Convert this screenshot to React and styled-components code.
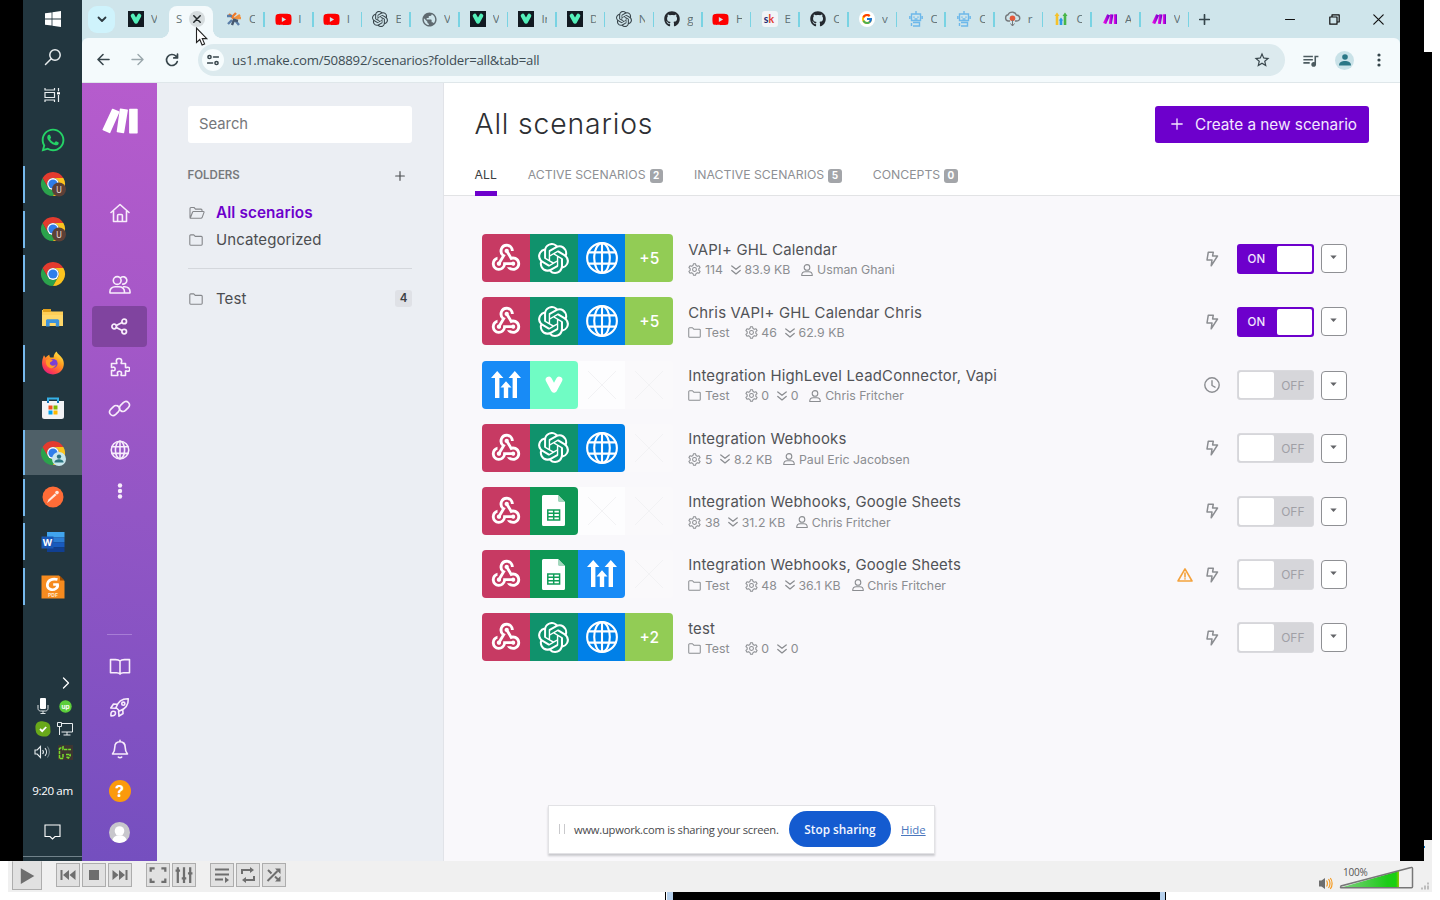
import React from "react";
import styled, { createGlobalStyle, css } from "styled-components";
import { FaWhatsapp, FaGithub, FaYoutube } from "react-icons/fa";
import { SiOpenai } from "react-icons/si";
import { FcGoogle } from "react-icons/fc";
import { MdWebhook, MdQueueMusic, MdStarBorder, MdPublic } from "react-icons/md";

const GlobalStyle = createGlobalStyle`
  * { box-sizing: border-box; }
  body { margin: 0; background: #fff; overflow: hidden; }
  svg { display: block; flex: none; }
`;

const inter = `"Inter", "Liberation Sans", sans-serif`;
const segoe = `"Open Sans", "Noto Sans", sans-serif`;

/* ---------- frame ---------- */
const Screen = styled.div`
  width: 1440px;
  height: 900px;
  display: flex;
  flex-direction: column;
  background: #fff;
  font-family: ${inter};
  overflow: hidden;
`;
const VideoRow = styled.div`
  display: flex;
  height: 861px;
  flex: none;
`;
const BlackBar = styled.div`
  width: ${(p) => p.$w}px;
  background: #000;
`;
const EdgeStrip = styled.div`
  width: 8px;
  padding-top: 52px;
  background: #fff;
  display: flex;
  flex-direction: column;
`;
const EdgeBlack = styled.div`
  height: 788px;
  background: #000;
`;
const EdgeGray = styled.div`
  height: 21px;
  background: #f0f0f0;
  padding-top: 6px;
  &::before {
    content: "";
    display: block;
    width: 1px;
    height: 2px;
    background: #0078d4;
  }
`;

/* ---------- taskbar ---------- */
const Taskbar = styled.div`
  width: 59px;
  background: #22363f;
  display: flex;
  flex-direction: column;
`;
const SystemCell = styled.div`
  height: 38px;
  display: flex;
  align-items: center;
  justify-content: center;
`;
const Apps = styled.div`
  margin-top: 3.4px;
  display: flex;
  flex-direction: column;
`;
const AppCell = styled.div`
  height: 44.7px;
  display: flex;
  align-items: center;
  background: ${(p) => (p.$active ? "#4f6068" : "transparent")};
`;
const AppMark = styled.div`
  width: 2px;
  height: ${(p) => (p.$active ? "44.7px" : "37px")};
  background: ${(p) => (p.$open ? "#76b9ed" : "transparent")};
`;
const AppIcon = styled.div`
  flex: 1;
  padding-right: 2px;
  display: flex;
  justify-content: center;
`;
const Tray = styled.div`
  margin-top: auto;
  display: flex;
  flex-direction: column;
`;
const TrayGrid = styled.div`
  display: grid;
  grid-template-columns: 23px 23px;
  grid-auto-rows: 23.2px;
  padding-left: 8px;
  place-items: center;
`;
const Clock = styled.div`
  height: 30px;
  margin-top: 12px;
  line-height: 30px;
  text-align: center;
  font: 11.6px/30px ${segoe};
  letter-spacing: -0.35px;
  color: #fff;
  white-space: nowrap;
`;
const NoticeCell = styled.div`
  height: 50px;
  padding-top: 2px;
  display: flex;
  align-items: center;
  justify-content: center;
`;
const ShowDesktop = styled.div`
  height: 5px;
  border-top: 1px solid #71828a;
`;

/* ---------- browser chrome ---------- */
const Browser = styled.div`
  width: 1318px;
  display: flex;
  flex-direction: column;
  position: relative;
  background: #cfe5eb;
`;
const TabStrip = styled.div`
  height: 38px;
  display: flex;
  align-items: center;
  flex: none;
`;
const TabSearch = styled.div`
  width: 27px;
  height: 27px;
  margin-left: 6px;
  border-radius: 9px;
  background: #cff3fc;
  display: flex;
  align-items: center;
  justify-content: center;
`;
const Tab = styled.div`
  width: ${(p) => p.$w || 48.65}px;
  height: 38px;
  padding-left: ${(p) => p.$pad ?? 10.2}px;
  display: flex;
  align-items: center;
  position: relative;
`;
const TabIcon = styled.div`
  width: 16px;
  height: 16px;
  display: flex;
  align-items: center;
  justify-content: center;
`;
const TabLabel = styled.span`
  width: 6px;
  margin-left: ${(p) => p.$ml ?? 7}px;
  overflow: hidden;
  font: 11.5px/16px ${segoe};
  color: #4a5a60;
  opacity: 0.85;
  white-space: nowrap;
`;
const TabSep = styled.i`
  width: 1.6px;
  height: 15px;
  margin-left: auto;
  background: #79d3e3;
`;
const ActiveTab = styled.div`
  width: 44px;
  height: 32px;
  margin-top: 6px;
  background: #f4fafc;
  border-radius: 8px 8px 0 0;
  display: flex;
  align-items: center;
  padding-left: 7px;
  padding-bottom: 6px;
  position: relative;
  &::before, &::after {
    content: "";
    position: absolute;
    bottom: 0;
    width: 8px;
    height: 8px;
  }
  &::before { left: -8px; background: radial-gradient(circle at 0 0, transparent 7.6px, #f4fafc 8px); }
  &::after { right: -8px; background: radial-gradient(circle at 100% 0, transparent 7.6px, #f4fafc 8px); }
`;
const CloseDot = styled.div`
  width: 16px;
  height: 16px;
  margin-left: 7px;
  border-radius: 50%;
  background: #d6dcde;
  display: flex;
  align-items: center;
  justify-content: center;
`;
const NewTab = styled.div`
  margin-left: 10px;
`;
const WindowButtons = styled.div`
  margin-left: auto;
  display: flex;
`;
const WindowButton = styled.div`
  width: 44px;
  display: flex;
  align-items: center;
  justify-content: center;
`;
const Toolbar = styled.div`
  height: 45px;
  flex: none;
  background: #f4fafc;
  border-bottom: 1px solid #dfe7ea;
  border-radius: 6px 6px 0 0;
  display: flex;
  align-items: center;
`;
const NavButton = styled.div`
  width: 34.5px;
  display: flex;
  justify-content: center;
`;
const NavButtons = styled.div`
  margin-left: 4px;
  display: flex;
`;
const Omnibox = styled.div`
  width: 1087px;
  height: 32px;
  margin-left: 8.5px;
  padding: 0 14px 0 4px;
  border-radius: 16px;
  background: #dceaee;
  display: flex;
  align-items: center;
`;
const SiteInfo = styled.div`
  width: 22px;
  height: 22px;
  border-radius: 50%;
  background: #f6fcfd;
  display: flex;
  align-items: center;
  justify-content: center;
`;
const Url = styled.span`
  margin-left: 8px;
  font: 13.2px/20px ${segoe};
  letter-spacing: -0.21px;
  color: #3e4d54;
  flex: 1;
`;
const ToolIcons = styled.div`
  margin-left: 8px;
  display: flex;
  align-items: center;
`;
const ToolIcon = styled.div`
  width: 34.5px;
  display: flex;
  justify-content: center;
`;
const ProfileDot = styled.div`
  width: 19px;
  height: 19px;
  border-radius: 50%;
  background: #c9e2e8;
  display: flex;
  align-items: center;
  justify-content: center;
`;
const Cursor = styled.div`
  position: absolute;
  left: 113px;
  top: 27px;
`;

/* ---------- app ---------- */
const Page = styled.div`
  flex: 1;
  display: flex;
  min-height: 0;
`;
const Rail = styled.nav`
  width: 75px;
  background: linear-gradient(188deg, #b65ccd 0%, #a758c8 28%, #9256c5 55%, #8151c2 82%, #744fbf 100%);
  display: flex;
  flex-direction: column;
  align-items: center;
  color: #f7ecfb;
`;
const RailLogo = styled.div`
  margin-top: 25px;
  height: 84px;
`;
const RailCell = styled.div`
  width: 55px;
  height: 41.15px;
  margin-bottom: ${(p) => p.$mb || 0}px;
  border-radius: 4px;
  background: ${(p) => (p.$on ? "#80449f" : "transparent")};
  display: flex;
  align-items: center;
  justify-content: center;
`;
const RailBottom = styled.div`
  margin-top: auto;
  padding-bottom: 8px;
  display: flex;
  flex-direction: column;
  align-items: center;
`;
const RailRule = styled.div`
  width: 25px;
  height: 1px;
  margin-bottom: 11.6px;
  background: #a77dd6;
`;
const HelpDot = styled.div`
  width: 22px;
  height: 22px;
  border-radius: 50%;
  background: #fb9a0c;
  color: #fff;
  font: 700 16px/22px ${inter};
  text-align: center;
`;
const Folders = styled.aside`
  width: 287px;
  padding: 23px 31px 0 30.5px;
  background: #ebeef3;
  border-right: 1px solid #e1e3e8;
`;
const SearchBox = styled.div`
  height: 36.5px;
  padding-left: 11.5px;
  border-radius: 3px;
  background: #fff;
  font-size: 14.8px;
  line-height: 37px;
  color: #75777b;
`;
const FoldersHead = styled.div`
  margin-top: 22.5px;
  height: 20px;
  padding-right: 7px;
  display: flex;
  align-items: center;
  justify-content: space-between;
  font-size: 11.5px;
  font-weight: 600;
  color: #77797c;
  svg { margin-top: 2px; }
`;
const FolderRow = styled.div`
  height: 27px;
  margin-top: ${(p) => p.$mt || 0}px;
  display: flex;
  align-items: center;
  font-size: 15px;
  letter-spacing: 0.08px;
  color: #4b4d50;
  ${(p) => p.$active && css`
    font-size: 15.3px;
    letter-spacing: 0.1px;
    font-weight: 600;
    color: #6d00cc;
  `}
`;
const FolderGlyph = styled.div`
  width: 28.5px;
  padding-left: 1px;
  color: #85878b;
`;
const FolderRule = styled.div`
  height: 1px;
  margin-top: 15px;
  background: #d4d7dc;
`;
const Count = styled.span`
  margin-left: auto;
  width: 17px;
  height: 17px;
  border-radius: 3px;
  background: #dfe1e6;
  color: #3c3e42;
  font-size: 11.5px;
  font-weight: 600;
  line-height: 17px;
  text-align: center;
`;
const Main = styled.main`
  width: 956px;
  background: #f9f8fb;
  display: flex;
  flex-direction: column;
`;
const Header = styled.header`
  height: 113px;
  flex: none;
  padding: 23px 31px 0 30.5px;
  background: #fff;
  border-bottom: 1px solid #e2e3e5;
  display: flex;
  flex-direction: column;
`;
const HeaderTop = styled.div`
  display: flex;
  justify-content: space-between;
`;
const Title = styled.h1`
  margin: 0;
  font-size: 28.3px;
  font-weight: 300;
  line-height: 37px;
  letter-spacing: 0.85px;
  color: #2d2f33;
`;
const CreateButton = styled.div`
  width: 214px;
  height: 36.5px;
  padding-left: 16px;
  border-radius: 3px;
  background: #6d00cc;
  color: #f4e8ff;
  display: flex;
  align-items: center;
  gap: 12px;
  font-size: 15.3px;
  white-space: nowrap;
`;
const Tabs = styled.div`
  margin-top: auto;
  margin-bottom: -1px;
  display: flex;
  gap: 31px;
  height: 37px;
`;
const FilterTab = styled.div`
  height: 37px;
  padding-top: 6px;
  display: flex;
  gap: 4px;
  font-size: 12.25px;
  line-height: 19px;
  white-space: nowrap;
  color: ${(p) => (p.$on ? "#3b3d41" : "#8e9094")};
  border-bottom: 5px solid ${(p) => (p.$on ? "#6d00cc" : "transparent")};
`;
const TabCount = styled.span`
  width: 13.5px;
  height: 13.5px;
  margin-top: 4px;
  border-radius: 3px;
  background: #a3a5a9;
  color: #fff;
  font-size: 10px;
  font-weight: 700;
  line-height: 13.5px;
  text-align: center;
`;
const List = styled.div`
  padding: 31.3px 53.4px 0 38.2px;
`;
const Scenario = styled.div`
  height: 63.15px;
  padding-top: 7px;
  display: flex;
`;
const Modules = styled.div`
  width: 191px;
  height: 48px;
  display: flex;
  border-radius: 4px;
  overflow: hidden;
`;
const Module = styled.div`
  width: 47.75px;
  height: 48px;
  display: flex;
  align-items: center;
  justify-content: center;
  background: ${(p) => p.$bg};
  color: #fff;
  font-size: 15.5px;
  font-weight: 500;
  ${(p) => p.$last && "border-radius: 0 4px 4px 0;"}
`;
const Info = styled.div`
  margin-left: 15px;
  padding-top: 5.4px;
  flex: 1;
`;
const Name = styled.div`
  font-size: 14.9px;
  line-height: 20px;
  letter-spacing: 0.21px;
  color: #515357;
  white-space: nowrap;
`;
const Meta = styled.div`
  display: flex;
  align-items: center;
  height: 20px;
  font-size: 12.3px;
  color: #8b8d91;
  white-space: nowrap;
`;
const MetaItem = styled.span`
  display: flex;
  align-items: center;
  gap: 3.7px;
  margin-right: ${(p) => p.$mr}px;
`;
const Controls = styled.div`
  height: 49px;
  display: flex;
  align-items: center;
  color: #8b8d91;
`;
const Trigger = styled.div`
  width: 16px;
  display: flex;
  justify-content: center;
  margin-left: 11px;
`;
const Toggle = styled.div`
  width: 76.5px;
  height: 30.5px;
  margin-left: 17px;
  padding: 2px;
  border-radius: 3px;
  display: flex;
  flex-direction: ${(p) => (p.$on ? "row" : "row-reverse")};
  align-items: center;
  background: ${(p) => (p.$on ? "#6d00cc" : "#d6d6da")};
  color: ${(p) => (p.$on ? "#f2e6fd" : "#a0a0a6")};
  font-size: 12px;
  ${(p) => !p.$on && "border: 1px solid #dadade; padding: 1px;"}
`;
const ToggleText = styled.span`
  flex: 1;
  padding-right: ${(p) => (p.$on ? 3 : 0)}px;
  text-align: center;
  font-size: ${(p) => (p.$on ? 11.5 : 12)}px;
  font-weight: ${(p) => (p.$on ? 500 : 400)};
`;
const Knob = styled.span`
  width: 35px;
  height: 26.5px;
  border-radius: 2px;
  background: #fff;
`;
const MenuButton = styled.div`
  width: 25.5px;
  height: 29px;
  margin-left: 7.5px;
  border: 1px solid #8f9094;
  border-radius: 4px;
  background: #fff;
  display: flex;
  align-items: center;
  justify-content: center;
  padding-bottom: 2px;
`;

/* ---------- sharing bar ---------- */
const ShareBar = styled.div`
  position: absolute;
  left: 466px;
  top: 805px;
  width: 387px;
  height: 49px;
  padding: 0 0 1px 10px;
  background: #fff;
  border: 1px solid #e2e2e5;
  box-shadow: 0 2px 2px #c9c9cd;
  display: flex;
  align-items: center;
  font-family: ${segoe};
  font-size: 11.2px;
  color: #48494c;
  white-space: nowrap;
`;
const Grip = styled.i`
  width: 6px;
  height: 10px;
  margin-right: 9px;
  border: solid #c9c9cc;
  border-width: 0 1.5px;
`;
const ShareText = styled.span`
  width: 215px;
  letter-spacing: -0.24px;
`;
const StopButton = styled.div`
  width: 102px;
  height: 36px;
  border-radius: 18px;
  background: #145bd0;
  color: #f3f7ff;
  font-size: 11.8px;
  font-weight: 600;
  line-height: 36px;
  text-align: center;
`;
const HideLink = styled.span`
  margin-left: 10px;
  color: #4a76bd;
  font-size: 11.4px;
  text-decoration: underline;
`;

/* ---------- player ---------- */
const Player = styled.div`
  height: 31px;
  flex: none;
  margin: 0 8px;
  padding-left: 4px;
  background: #f0f0f0;
  display: flex;
`;
const PlayerGroup = styled.div`
  display: flex;
  gap: 2px;
  margin: 2px 0 0 14px;
`;
const PlayerButton = styled.div`
  width: ${(p) => p.$s || 24}px;
  height: ${(p) => (p.$s ? 29 : 24)}px;
  border: 1px solid #adadad;
  ${(p) => p.$s && "border-top-color: #e1e1e1;"}
  background: #e1e1e1;
  display: flex;
  align-items: center;
  justify-content: center;
`;
const Volume = styled.div`
  margin-left: auto;
  display: flex;
  position: relative;
`;
const VolumeText = styled.span`
  position: absolute;
  left: 25px;
  top: 5px;
  font: 10px/13px ${segoe};
  letter-spacing: -0.2px;
  color: #555;
`;
const BottomStrip = styled.div`
  height: 8px;
  display: flex;
  padding-left: 665px;
`;
const Slice = styled.i`
  width: ${(p) => p.$w}px;
  background: ${(p) => p.$c};
`;

/* ---------- drawings ---------- */
const Line = ({ s = 20, w = 1.6, vb = 24, children, ...r }) => (
  <svg width={s} height={s} viewBox={`0 0 ${vb} ${vb}`} fill="none" stroke="currentColor" strokeWidth={w} strokeLinecap="round" strokeLinejoin="round" {...r}>{children}</svg>
);

const WindowsLogo = () => (
  <svg width="16" height="16" viewBox="0 0 16 16" fill="#fff">
    <path d="M0 2.3 6.6 1.4V7.6H0ZM7.4 1.3 16 0V7.6H7.4ZM0 8.4H6.6V14.6L0 13.7ZM7.4 8.4H16V16L7.4 14.7Z" />
  </svg>
);
const SearchGlyph = () => <Line s={18} w={1.5} vb={18} color="#e8edef"><circle cx="11" cy="7" r="5.2" /><path d="M7.2 10.8 1.5 16.5" /></Line>;
const TaskView = () => (
  <svg width="17" height="16" viewBox="0 0 17 16" fill="none" stroke="#e8edef" strokeWidth="1.2">
    <path d="M1 1v2h9.500V1M1 15v-2h9.500v2M1 5.500h9.500v5H1zM14.500 1v3.200M14.500 8v7" /><path d="M13 5.200h3v2.200h-3z" fill="#fff" stroke="none" />
  </svg>
);
const Chrome = ({ badge }) => (
  <svg width="26" height="26" viewBox="0 0 26 26">
    <path d="M2.600 7A12 12 0 0 0 13 25l5.200-9a6 6 0 0 1-10.400 0Z" fill="#2ba24c" />
    <path d="M23.400 7A12 12 0 0 1 13 25l5.200-9A6 6 0 0 0 13 7Z" fill="#fcc31e" />
    <path d="M13 1a12 12 0 0 1 10.400 6H13a6 6 0 0 0-5.200 9L2.600 7A12 12 0 0 1 13 1Z" fill="#e33b2e" />
    <circle cx="13" cy="13" r="5.900" fill="#fff" /><circle cx="13" cy="13" r="4.600" fill="#2f7de9" />
    {badge === "U" && <g><circle cx="19" cy="18.500" r="7" fill="#5d4037" /><text x="19" y="21.800" fontSize="8.500" fill="#e8dcd8" textAnchor="middle" fontFamily="Roboto, sans-serif">U</text></g>}
    {badge === "P" && <g><circle cx="19" cy="19" r="7" fill="#c8e6ec" /><circle cx="19" cy="16.600" r="2.200" fill="#2d7482" /><path d="M14.400 22.600c0-2.600 2.600-3.400 4.600-3.400s4.600.8 4.600 3.400Z" fill="#2d7482" /></g>}
  </svg>
);
const Explorer = () => (
  <svg width="22" height="18" viewBox="0 0 22 18">
    <path d="M0 1h8l1.500 1.500H21V17H0Z" fill="#ffcf57" /><path d="M1 0h8v3H1z" fill="#e2a11c" /><path d="M0 6h21v11H0Z" fill="#ffd869" />
    <path d="M4 17.500v-6.300l1-1h11l1.200 1v6.300h-3.400v-3.400H7.600v3.400Z" fill="#3c93dd" />
  </svg>
);
const Firefox = () => (
  <svg width="24" height="24" viewBox="0 0 24 24">
    <defs><linearGradient id="ff" x1=".85" y1="0" x2=".2" y2="1"><stop offset="0" stopColor="#fff04a" /><stop offset=".4" stopColor="#ff9a1f" /><stop offset=".75" stopColor="#ff4648" /><stop offset="1" stopColor="#e31587" /></linearGradient></defs>
    <path d="M3 4.200 4.600 6.800C5.600 5.400 7 4.400 8.400 3.800c-.2 1 .3 2 1 2.600l3.200.2C12.600 4.200 14 1.600 15.600.6c.6 2.400 4 4 5.800 6.800C24.700 12.800 22.600 23 12 23.400 3 23.200.3 15.600 1.200 10 1.500 7.500 2.400 5.400 3 4.200Z" fill="url(#ff)" />
    <circle cx="12" cy="12.600" r="4.600" fill="#7b3fd6" /><path d="M5 9.200c2.400-1.800 4.600-.6 6.800-.2-.6 1.800-2.600 1.600-3 3 .4 3 4 3.400 6.200 1.400-1 3.200-4.400 4.600-7 3.200C5.400 15.200 4.400 12 5 9.200Z" fill="#ff9a26" />
  </svg>
);
const Store = () => (
  <svg width="24" height="24" viewBox="0 0 24 24">
    <path d="M7 8V2.600h10V8" fill="none" stroke="#35b1e8" strokeWidth="2" />
    <path d="M1 5h22v15.500a2.500 2.500 0 0 1-2.500 2.500h-17A2.500 2.500 0 0 1 1 20.500Z" fill="#f2f3f5" />
    <path d="M7 5v2M17 5v2" stroke="#1474b8" strokeWidth="2" />
    <path d="M7.500 9.500h4v4h-4z" fill="#f25022" /><path d="M12.500 9.500h4v4h-4z" fill="#7fba00" /><path d="M7.500 14.500h4v4h-4z" fill="#00a4ef" /><path d="M12.500 14.500h4v4h-4z" fill="#ffb900" />
  </svg>
);
const Postman = () => (
  <svg width="22" height="22" viewBox="0 0 22 22"><circle cx="11" cy="11" r="10.500" fill="#ff6c37" /><path d="M5 17 6.500 13.500 12.800 7.500 14.600 9 8 14.800Z" fill="#ffe9df" /><circle cx="15" cy="6.600" r="1.800" fill="#ffe9df" /></svg>
);
const Word = () => (
  <svg width="24" height="22" viewBox="0 0 24 22">
    <path d="M6 1h17.500v5.200H6z" fill="#41a5ee" /><path d="M6 6.200h17.500v5H6z" fill="#2b7cd3" /><path d="M6 11.200h17.500v5H6z" fill="#185abd" /><path d="M6 16.200h17.500V21H6z" fill="#103f91" />
    <path d="M.5 5.500h12v12H.5z" fill="#1a58b5" /><text x="6.500" y="14.800" fontSize="9.500" fontWeight="700" fill="#fff" textAnchor="middle" fontFamily="Inter, sans-serif">W</text>
  </svg>
);
const Foxit = () => (
  <svg width="24" height="24" viewBox="0 0 24 24">
    <path d="M.5.5H18l5.500 5.500v17.500H.5z" fill="#f68b1f" /><path d="M19 1v4.500h4.500z" fill="#a14c00" />
    <path d="M16.500 4.500C11 3 6.500 5.500 6.300 10c0 4.500 5.500 6 8.700 3.500 1.500-1.200 2-2.500 1.600-4h-4.400" fill="none" stroke="#fff" strokeWidth="2.700" />
    <text x="12" y="22.200" fontSize="5" fontWeight="700" fill="#ffe6c7" textAnchor="middle" fontFamily="Inter, sans-serif">PDF</text>
  </svg>
);
const Mic = () => (
  <svg width="12" height="16" viewBox="0 0 12 16"><rect x="3" y="0" width="6" height="11" rx="1" fill="#fff" /><path d="M1 7v3.500c0 1.500 1.200 2.500 2.500 2.500h5c1.300 0 2.500-1 2.500-2.500V7M6 13v2.500M3.500 15.500h5" fill="none" stroke="#dfe5e7" /></svg>
);
const Upwork = () => (
  <svg width="13" height="13" viewBox="0 0 13 13"><circle cx="6.500" cy="6.500" r="6.200" fill="#5cce3b" /><text x="6.500" y="8.600" fontSize="6.500" fontWeight="700" fill="#fff" textAnchor="middle" fontFamily="Inter, sans-serif">up</text></svg>
);
const SkypeOk = () => (
  <svg width="16" height="16" viewBox="0 0 16 16"><path d="M5 .5c2-.6 8 .5 9.500 3 1.200 2 .6 4 1 6.500.3 3-3 6-6 5.500C5 15.500 1.500 14 .8 10 .3 7-.5 1.500 5 .5Z" fill="#69a91a" /><path d="m5 8 2.200 2.200L11.200 6" fill="none" stroke="#fff" strokeWidth="1.800" /></svg>
);
const Monitor = () => (
  <svg width="17" height="14" viewBox="0 0 17 14" fill="none" stroke="#e8edef"><path d="M4.500 1.500h11v8.500h-11M10 10v3M6.500 13h7M.5.5h4v4h-4zM2.500 4.500V13" /></svg>
);
const Speaker = () => (
  <svg width="17" height="14" viewBox="0 0 17 14" fill="none" stroke="#e8edef" strokeWidth="1.100"><path d="M1 5h2.200L6.500 1.500v11L3.200 9H1Z" /><path d="M8.600 5c1 1.200 1 2.800 0 4M11 3.200c2 2.200 2 5.400 0 7.600" /><path d="M13.400 1.500c2.600 3.200 2.600 7.800 0 11" stroke="#72838a" /></svg>
);
const Gpu = () => (
  <svg width="15" height="15" viewBox="0 0 15 15" fill="none"><path d="M0 0h15v15H0z" fill="#3d3531" /><path d="M1.500 13.500v-10L5 2v2.500L13 4.500M5 9v4.500M2 13.500h3M8 9.500h5M8.500 12l2 1 2-3" stroke="#77dc2c" strokeWidth="1.500" strokeDasharray="3.500 .8" /></svg>
);
const Notice = () => (
  <svg width="17" height="16" viewBox="0 0 17 16" fill="none" stroke="#fff" strokeWidth="1.100"><path d="M1 1h15v11.500h-5L8.500 15 6 12.500H1Z" /></svg>
);

const Vapi = () => (
  <svg width="16" height="16" viewBox="0 0 16 16"><path d="M0 0h16v16H0z" fill="#121a22" /><path d="M4.700 4.700 8 10.700l3.300-6" fill="none" stroke="#54efba" strokeWidth="4" strokeLinecap="round" strokeLinejoin="round" /></svg>
);
const Pinwheel = () => (
  <svg width="16" height="16" viewBox="0 0 16 16" fill="none" strokeWidth="2.400"><path d="M8 8 3 3M10 2 6 6" stroke="#ee7a2b" /><path d="m8 8 6-4M15 7h-5" stroke="#f0913e" /><path d="M1 5h5M8 8l5 6M2 13l4-4" stroke="#5b7fa8" /><path d="m6 14 2-5 4 1" stroke="#46586e" /></svg>
);
const Sk = () => (
  <svg width="16" height="16" viewBox="0 0 16 16"><rect width="16" height="16" rx="3" fill="#f1f5f8" /><text x="1.800" y="12" fontSize="10.500" fontWeight="700" fontFamily="Lato, sans-serif" fill="#202a74">s<tspan fill="#e23b30">k</tspan></text></svg>
);
const Robot = () => (
  <svg width="14" height="16" viewBox="0 0 14 16" fill="none" stroke="#6db8ea" strokeWidth="1.400"><path d="M7 0v3M2.500 3h9v6.500h-9zM.8 5v3M13.200 5v3M4 11.500h6.500v3.500H4M2.500 12v3" /><path d="M5 5.500v1.200M9 5.500v1.200M5.500 8h3" /></svg>
);
const CloudPin = () => (
  <svg width="17" height="16" viewBox="0 0 17 16" fill="none"><path d="M6 10H4a3.200 3.200 0 0 1 0-6.200C5 1.500 7 1 9 1.200c2 .3 3 1.600 3.400 2.800 4.400.4 4.400 6 .4 6H11" stroke="#75797c" strokeWidth="1.400" /><circle cx="8.500" cy="7.200" r="2.800" fill="#e5593b" /><path d="M8.500 9v6M6.500 12.500l2 2.500 2-2.500" stroke="#75797c" /></svg>
);
const Arrows3 = () => (
  <svg width="14" height="16" viewBox="0 0 14 16" fill="none" strokeWidth="2.600"><path d="M3 4v10" stroke="#f5c22c" /><path d="M.5 5 3 1.500 5.500 5Z" fill="#f5c22c" /><path d="M7 9v5" stroke="#2d9ae8" /><path d="M4.800 9.500 7 6.500l2.200 3Z" fill="#2d9ae8" /><path d="M11 4v10" stroke="#47b648" /><path d="M8.500 5 11 1.500 13.500 5Z" fill="#47b648" /></svg>
);
const MakeMark = ({ s = 1, color }) => (
  <svg width={36 * s} height={26 * s} viewBox="0 0 36 26">
    {!color && <defs><linearGradient id="mk" x1="0" x2="1"><stop offset="0" stopColor="#ff10e8" /><stop offset="1" stopColor="#5c00c8" /></linearGradient></defs>}
    <g fill={color || "url(#mk)"}><path d="M10.900.8 17 3.300a.7.7 0 0 1 .4 1L8.300 24.700a.7.7 0 0 1-1 .4L.9 22.300a.7.7 0 0 1-.3-1L10 1.100a.7.7 0 0 1 .9-.3Z" /><path d="m18.600.4 6.700 1a.7.7 0 0 1 .6.8l-3.700 22.400a.7.7 0 0 1-.8.6l-6.100-1a.7.7 0 0 1-.6-.8L17.800 1a.7.7 0 0 1 .8-.6Z" /><path d="M27.800.7h7.200a.7.7 0 0 1 .7.7v23.300a.7.7 0 0 1-.7.7h-7.200a.7.7 0 0 1-.7-.7V1.400a.7.7 0 0 1 .7-.7Z" /></g>
  </svg>
);

const RailHome = () => <Line s={20} vb={20} w={1.6}><path d="M1 9.500 10 1.500l9 8M3.500 8v10.500h13V8M7.600 18v-5.500a1 1 0 0 1 1-1h2.800a1 1 0 0 1 1 1V18" /></Line>;
const RailUsers = () => <Line s={22} vb={22} w={1.6}><circle cx="8.200" cy="6.500" r="3.900" /><path d="M11.700 3.600a3.700 3.700 0 1 1 2 6.500M1 19c-.6-4.800 2.600-6.200 5.200-6.200h3.600c3 0 6.200 1.400 5.600 6.200ZM14.500 12.800c4.500-.4 7 1.700 6.500 6.200h-5" /></Line>;
const RailShare = () => <Line s={17} vb={17} w={1.7}><circle cx="3.200" cy="8.500" r="2.300" /><circle cx="13.200" cy="3.400" r="2.300" /><circle cx="13.200" cy="13.600" r="2.300" /><path d="m5.300 7.500 5.800-3M5.300 9.500l5.800 3" /></Line>;
const RailPuzzle = () => <Line s={20} vb={20} w={1.6}><path d="M1.500 6.500h5.200c.5-.6-.4-1.200-.4-2.400C6.300 2.600 7.500 1.500 9 1.500s2.700 1.100 2.700 2.600c0 1.200-.9 1.800-.4 2.400h4.200v4c.6.5 1.200-.3 2.200-.3a2 2 0 0 1 0 4.100c-1 0-1.600-.8-2.200-.3v4.500h-4.300c-.5-.6.3-1.200.3-2.200a2 2 0 0 0-4.100 0c0 1 .8 1.600.3 2.200H1.500v-5c.6-.5 1.200.3 2.200.3a1.900 1.900 0 0 0 0-3.700c-1 0-1.600.8-2.200.3Z" /></Line>;
const RailLink = () => <Line s={23} vb={23} w={1.6}><path d="M13.500 14.300c-2.300-1.200-2.700-4.100-1-5.900l2.800-2.800c3.600-3.300 8.300 1.400 5 5l-2.800 2.700c-1.300 1.300-3.200 1.300-4.500.5" /><path d="M9.500 8.700c2.300 1.200 2.700 4.100 1 5.900l-2.800 2.800c-3.600 3.300-8.300-1.400-5-5l2.800-2.700C6.800 8.400 8.700 8.400 10 9.200" /></Line>;
const GlobeLines = ({ s, w }) => <Line s={s} vb={24} w={w}><circle cx="12" cy="12" r="10.500" /><ellipse cx="12" cy="12" rx="5.500" ry="10.500" /><path d="M12 1.500v21M2.500 8h19M2.500 16h19" /></Line>;
const Dots = ({ c = "currentColor", r = 2, gap = 6, s = 18 }) => <svg width={s} height={s} viewBox={`0 0 ${s} ${s}`} fill={c}>{[-gap, 0, gap].map((d) => <circle key={d} cx={s / 2} cy={s / 2 + d} r={r} />)}</svg>;
const RailBook = () => <Line s={22} vb={22} w={1.6}><path d="M11 5C9.800 3.700 8 3.600 6.500 3.600H1.500v13.200h6c1.500 0 2.700.3 3.500 1.300.8-1 2-1.300 3.500-1.300h6V3.600h-5C14 3.600 12.200 3.700 11 5ZM11 5v13" /></Line>;
const RailRocket = () => <Line s={21} vb={21} w={1.6}><path d="M7 10.500C9 4.500 13 1.500 19.300 1.700 19.500 8 16.500 12 10.500 14ZM7 10.500l3.500 3.500M8.200 7.200 4.500 7 1.800 11l5 .2M13.800 12.800l.2 3.700-4 2.700-.4-5" /><circle cx="14.300" cy="6.700" r="1.600" /><path d="M2 19c-.4-3 .3-4.600 2-4.800 2-.1 2.600 1 2.400 2.500C6.200 18.300 4.500 19 2 19Z" /></Line>;
const RailBell = () => <Line s={20} vb={20} w={1.6}><path d="M10 2.800c-3.300 0-5.200 2.300-5.200 5.400 0 3.400-.8 5-2.300 6.800h15c-1.500-1.800-2.300-3.400-2.300-6.800 0-3.100-1.900-5.400-5.200-5.400ZM10 2.800V1.300M8.300 18c.8 1 2.600 1 3.400 0" /></Line>;
const Avatar = () => <svg width="21" height="21" viewBox="0 0 21 21"><clipPath id="av"><circle cx="10.500" cy="10.500" r="10.500" /></clipPath><g clipPath="url(#av)"><path d="M0 0h21v21H0z" fill="#c8c7cc" /><circle cx="10.500" cy="9" r="4.800" fill="#fff" /><path d="M3 21c0-5 3-7 5-7.500h5c2 .5 5 2.500 5 7.500Z" fill="#fff" /></g></svg>;

const FolderIcon = ({ s = 14, w = 1.1 }) => <Line s={s} vb={14} w={w}><path d="M.8 2.800a.9.9 0 0 1 .9-.9h3.100l1.400 1.500h6.100a.9.9 0 0 1 .9.9v7a.9.9 0 0 1-.9.9H1.700a.9.9 0 0 1-.9-.9Z" /></Line>;
const FolderOpen = () => <Line s={16} vb={16} w={1.1}><path d="M1 12V3.500c0-.6.3-1 1-1h3l1.500 1.600H12c.6 0 1 .4 1 1V6.500M1.200 13.200 3.600 7c.1-.3.4-.5.8-.5h10c.6 0 .8.4.6.9l-1.900 5.200c-.2.4-.5.7-1 .7H1.800c-.5 0-.8-.3-.8-.8" /></Line>;
const Cog = () => <Line s={13} vb={24} w={1.9}><path d="M10 1.500h4l.7 3 2.600 1.500 3-.9 2 3.400-2.300 2.100v2.900l2.300 2.100-2 3.400-3-.9-2.600 1.500-.7 3h-4l-.7-3-2.600-1.500-3 .9-2-3.400L4 13.500v-2.900L1.700 8.500l2-3.400 3 .9 2.600-1.500Z" /><circle cx="12" cy="12" r="3.600" /></Line>;
const Chevs = () => <Line s={10} vb={10} w={1.3}><path d="M.8 1 5 4.300 9.200 1M.8 5.500 5 8.900l4.200-3.400" /></Line>;
const Person = () => <Line s={12} vb={12} w={1.1}><circle cx="6" cy="3.400" r="2.800" /><path d="M.7 11.500c0-2.600 1.600-3.700 3.400-3.700h3.800c1.800 0 3.400 1.100 3.400 3.700Z" /></Line>;
const Bolt = () => <Line s={16} vb={16} w={1.5}><path d="M4.300 1.200H9.300L8.600 5h4.900L7.200 14.800 8 9H3Z" /></Line>;
const ClockIcon = () => <Line s={16} vb={16} w={1.4}><circle cx="8" cy="8" r="7.200" /><path d="M8 3.700V8.500l3 1.700" /></Line>;
const Warn = () => <Line s={16} vb={16} w={1.6} color="#f4a23c"><path d="M8 1.900 15 14H1ZM8 6v4M8 11.900v.1" /></Line>;
const Caret = () => <svg width="7" height="5" viewBox="0 0 7 5"><path d="M.3.5h6.400L3.500 4Z" fill="#636468" /></svg>;
const Plus = ({ s, w = 1.4, c = "currentColor" }) => <Line s={s} vb={12} w={w} color={c}><path d="M6 .8v10.400M.8 6h10.400" /></Line>;

const Sheet = () => <svg width="23" height="31" viewBox="0 0 23 31"><path d="M1.500 0H16l7 7v22.500a1.500 1.500 0 0 1-1.500 1.500h-20A1.500 1.500 0 0 1 0 29.500v-28A1.500 1.500 0 0 1 1.500 0Z" fill="#fff" /><path d="M16 0v5.500c0 .8.7 1.500 1.500 1.500H23Z" fill="#a3d7bd" /><path d="M5.800 15h11.800v10H5.800zM5.800 18.300h11.800M5.800 21.700h11.800M11.700 15v10" fill="none" stroke="#0f9d58" strokeWidth="1.500" /></svg>;
const HighLevel = () => <svg width="30" height="28" viewBox="0 0 30 28" fill="#fff"><path d="M0 7 6.200 0l6.200 7H8.400v20H4V7ZM17.600 7l6.200-7L30 7h-4v20h-4.400V7ZM9.500 16.500 15 10.200l5.500 6.300h-3.300V27h-4.400V16.500Z" /></svg>;
const VapiBig = () => <svg width="20" height="18" viewBox="0 0 20 18"><path d="M4.800 3.800 10 13.400l5.200-9.600" fill="none" stroke="#fff" strokeWidth="6.300" strokeLinecap="round" strokeLinejoin="round" /></svg>;
const Cross = () => <svg width="30" height="30" viewBox="0 0 30 30" stroke="#f2f2f4" fill="none"><path d="m1 1 28 28M29 1 1 29" /></svg>;

const modules = {
  hook: ["#c73a63", <MdWebhook size={34} />],
  ai: ["#10926c", <SiOpenai size={31} />],
  http: ["#0080e8", <GlobeLines s={34} w={1.5} />],
  ghl: ["#188bf6", <HighLevel />],
  vapi: ["#70fcc4", <VapiBig />],
  sheet: ["#0f9755", <Sheet />],
  p5: ["#92cc55", "+5"],
  p2: ["#92cc55", "+2"],
  none1: ["#fdfdfe", <Cross />],
  none2: ["#faf9fb", <Cross />],
};

const scenarios = [
  { name: "VAPI+ GHL Calendar", mods: ["hook", "ai", "http", "p5"], ops: "114", data: "83.9 KB", who: "Usman Ghani", on: true },
  { name: "Chris VAPI+ GHL Calendar Chris", mods: ["hook", "ai", "http", "p5"], folder: "Test", ops: "46", data: "62.9 KB", on: true },
  { name: "Integration HighLevel LeadConnector, Vapi", mods: ["ghl", "vapi", "none1", "none2"], folder: "Test", ops: "0", data: "0", who: "Chris Fritcher", clock: true },
  { name: "Integration Webhooks", mods: ["hook", "ai", "http", "none2"], ops: "5", data: "8.2 KB", who: "Paul Eric Jacobsen" },
  { name: "Integration Webhooks, Google Sheets", mods: ["hook", "sheet", "none1", "none2"], ops: "38", data: "31.2 KB", who: "Chris Fritcher" },
  { name: "Integration Webhooks, Google Sheets", mods: ["hook", "sheet", "ghl", "none2"], folder: "Test", ops: "48", data: "36.1 KB", who: "Chris Fritcher", warn: true },
  { name: "test", mods: ["hook", "ai", "http", "p2"], folder: "Test", ops: "0", data: "0" },
];

const yt = <FaYoutube size={17} color="#fe0000" />;
const gh = <FaGithub size={16} color="#24292f" />;
const ai = <SiOpenai size={16} color="#38454b" />;
const googleDot = <svg width="16" height="16" viewBox="0 0 16 16"><circle cx="8" cy="8" r="8" fill="#fff" /><g transform="translate(2 2)"><FcGoogle size={12} /></g></svg>;
const browserTabs = [
  [<Pinwheel />, "C"], [yt, "I"], [yt, "I"], [ai, "E"], [<MdPublic size={17} color="#5f6a70" />, "V"], [<Vapi />, "V"],
  [<Vapi />, "In"], [<Vapi />, "D"], [ai, "N"], [gh, "g"], [yt, "H"], [<Sk />, "E"], [gh, "C"], [googleDot, "v"],
  [<Robot />, "C"], [<Robot />, "C"], [<CloudPin />, "r"], [<Arrows3 />, "C"], [<MakeMark s={0.4} />, "A"], [<MakeMark s={0.4} />, "V"],
];

const apps = [
  [<FaWhatsapp size={26} color="#25d366" />, false],
  [<Chrome badge="U" />, true], [<Chrome badge="U" />, true], [<Chrome />, true],
  [<Explorer />, false], [<Firefox />, true], [<Store />, false],
  [<Chrome badge="P" />, true, true], [<Postman />, true], [<Word />, true], [<Foxit />, true],
];

const ScenarioRow = ({ s }) => {
  const last = s.mods.findIndex((m) => m.startsWith("none")) - 1;
  return (
    <Scenario>
      <Modules>
        {s.mods.map((m, i) => <Module key={i} $bg={modules[m][0]} $last={i === last}>{modules[m][1]}</Module>)}
      </Modules>
      <Info>
        <Name>{s.name}</Name>
        <Meta>
          {s.folder && <MetaItem $mr={15}><FolderIcon s={13} />{s.folder}</MetaItem>}
          <MetaItem $mr={8}><Cog />{s.ops}</MetaItem>
          <MetaItem $mr={11}><Chevs />{s.data}</MetaItem>
          {s.who && <MetaItem $mr={0}><Person />{s.who}</MetaItem>}
        </Meta>
      </Info>
      <Controls>
        {s.warn && <Warn />}
        <Trigger>{s.clock ? <ClockIcon /> : <Bolt />}</Trigger>
        <Toggle $on={s.on}><ToggleText $on={s.on}>{s.on ? "ON" : "OFF"}</ToggleText><Knob /></Toggle>
        <MenuButton><Caret /></MenuButton>
      </Controls>
    </Scenario>
  );
};

const PlayerGlyph = ({ d, w = 16, stroke }) => (
  <svg width={w} height={w} viewBox="0 0 16 16" fill={stroke ? "none" : "#6e6e6e"} stroke={stroke ? "#6e6e6e" : "none"} strokeWidth="2"><path d={d} /></svg>
);

export default function App() {
  return (
    <Screen>
      <GlobalStyle />
      <VideoRow>
        <BlackBar $w={23} />
        <Taskbar>
          <SystemCell><WindowsLogo /></SystemCell>
          <SystemCell><SearchGlyph /></SystemCell>
          <SystemCell><TaskView /></SystemCell>
          <Apps>
            {apps.map(([icon, open, active], i) => (
              <AppCell key={i} $active={active}><AppMark $open={open} $active={active} /><AppIcon>{icon}</AppIcon></AppCell>
            ))}
          </Apps>
          <Tray>
            <TrayGrid>
              <span />
              <Line s={14} vb={14} w={1.3} color="#fff"><path d="m4.500 2 5 5-5 5" /></Line>
              <Mic /><Upwork /><SkypeOk /><Monitor /><Speaker /><Gpu />
            </TrayGrid>
            <Clock>9:20 am</Clock>
            <NoticeCell><Notice /></NoticeCell>
            <ShowDesktop />
          </Tray>
        </Taskbar>
        <Browser>
          <TabStrip>
            <TabSearch><Line s={10} vb={10} w={1.8} color="#2d3a40"><path d="m1.500 3.500 3.500 3.500 3.500-3.500" /></Line></TabSearch>
            <Tab $w={54} $pad={13}><TabIcon><Vapi /></TabIcon><TabLabel>V</TabLabel></Tab>
            <ActiveTab><TabLabel $ml={0}>S</TabLabel><CloseDot><Line s={8} vb={8} w={1.5} color="#22282b"><path d="m.8.8 6.400 6.400M7.200.8.8 7.200" /></Line></CloseDot></ActiveTab>
            {browserTabs.map(([icon, t], i) => (
              <Tab key={i} $w={i === 0 ? 52 : undefined} $pad={i === 0 ? 13 : undefined}><TabIcon>{icon}</TabIcon><TabLabel>{t}</TabLabel><TabSep /></Tab>
            ))}
            <NewTab><Plus s={11} w={1.8} c="#35454b" /></NewTab>
            <WindowButtons>
              <WindowButton><Line s={10} vb={10} w={1.1} color="#111"><path d="M.5 5.500h9" /></Line></WindowButton>
              <WindowButton><Line s={11} vb={11} w={1.2} color="#111"><path d="M.8 3h7.200v7.200H.8zM3 3V.8h7.200V8H8" /></Line></WindowButton>
              <WindowButton><Line s={11} vb={11} w={1.2} color="#111"><path d="m.8.8 9.400 9.400M10.200.8.8 10.200" /></Line></WindowButton>
            </WindowButtons>
          </TabStrip>
          <Toolbar>
            <NavButtons>
              <NavButton><Line s={13} vb={13} w={1.6} color="#38464c"><path d="M12 6.500H1.200M6 1.500l-5 5 5 5" /></Line></NavButton>
              <NavButton><Line s={13} vb={13} w={1.4} color="#9aa7ac"><path d="M1 6.500h10.800M7 1.500l5 5-5 5" /></Line></NavButton>
              <NavButton><Line s={14} vb={14} w={1.7} color="#38464c"><path d="M12.300 8.500A5.500 5.500 0 1 1 11 3.200l1.300 1.500M12.500 1.200v3.700H8.800" /></Line></NavButton>
            </NavButtons>
            <Omnibox>
              <SiteInfo><Line s={12} vb={12} w={1.5} color="#38464c"><circle cx="2.500" cy="3" r="1.600" /><path d="M6.500 3h5M.6 9h5" /><circle cx="9.500" cy="9" r="1.600" /></Line></SiteInfo>
              <Url>us1.make.com/508892/scenarios?folder=all&amp;tab=all</Url>
              <MdStarBorder size={18} color="#38464c" />
            </Omnibox>
            <ToolIcons>
              <ToolIcon><MdQueueMusic size={19} color="#4c5b60" /></ToolIcon>
              <ToolIcon><ProfileDot><svg width="12" height="12" viewBox="0 0 12 12" fill="#2a7786"><circle cx="6" cy="3" r="2.800" /><path d="M0 11.500C0 8 3 7 6 7s6 1 6 4.500Z" /></svg></ProfileDot></ToolIcon>
              <ToolIcon><Dots c="#35454b" r={1.6} gap={5} s={16} /></ToolIcon>
            </ToolIcons>
          </Toolbar>
          <Page>
            <Rail>
              <RailLogo><MakeMark color="#fff" /></RailLogo>
              <RailCell $mb={31.5}><RailHome /></RailCell>
              <RailCell><RailUsers /></RailCell>
              <RailCell $on><RailShare /></RailCell>
              <RailCell><RailPuzzle /></RailCell>
              <RailCell><RailLink /></RailCell>
              <RailCell><GlobeLines s={20} w={1.9} /></RailCell>
              <RailCell><Dots r={2.2} gap={5.5} /></RailCell>
              <RailBottom>
                <RailRule />
                <RailCell><RailBook /></RailCell>
                <RailCell><RailRocket /></RailCell>
                <RailCell $mb={1.2}><RailBell /></RailCell>
                <RailCell><HelpDot>?</HelpDot></RailCell>
                <RailCell><Avatar /></RailCell>
              </RailBottom>
            </Rail>
            <Folders>
              <SearchBox>Search</SearchBox>
              <FoldersHead>FOLDERS<Plus s={10} w={1.4} c="#4b4d50" /></FoldersHead>
              <FolderRow $active $mt={14}><FolderGlyph><FolderOpen /></FolderGlyph>All scenarios</FolderRow>
              <FolderRow><FolderGlyph><FolderIcon /></FolderGlyph>Uncategorized</FolderRow>
              <FolderRule />
              <FolderRow $mt={16}><FolderGlyph><FolderIcon /></FolderGlyph>Test<Count>4</Count></FolderRow>
            </Folders>
            <Main>
              <Header>
                <HeaderTop>
                  <Title>All scenarios</Title>
                  <CreateButton><Plus s={12} w={1.3} />Create a new scenario</CreateButton>
                </HeaderTop>
                <Tabs>
                  <FilterTab $on>ALL</FilterTab>
                  <FilterTab>ACTIVE SCENARIOS<TabCount>2</TabCount></FilterTab>
                  <FilterTab>INACTIVE SCENARIOS<TabCount>5</TabCount></FilterTab>
                  <FilterTab>CONCEPTS<TabCount>0</TabCount></FilterTab>
                </Tabs>
              </Header>
              <List>
                {scenarios.map((s, i) => <ScenarioRow key={i} s={s} />)}
              </List>
            </Main>
          </Page>
          <Cursor><svg width="14" height="20" viewBox="0 0 14 20"><path d="M1.500 1v14.500l3.300-3 2.300 5.500 2.500-1.100-2.300-5.300h4.500Z" fill="#fff" stroke="#222" strokeWidth="1.100" /></svg></Cursor>
          <ShareBar>
            <Grip />
            <ShareText>www.upwork.com is sharing your screen.</ShareText>
            <StopButton>Stop sharing</StopButton>
            <HideLink>Hide</HideLink>
          </ShareBar>
        </Browser>
        <BlackBar $w={24} />
        <EdgeStrip><EdgeBlack /><EdgeGray /></EdgeStrip>
      </VideoRow>
      <Player>
        <PlayerButton $s={30}><PlayerGlyph w={18} d="M2.500 1 14.500 8l-12 7Z" /></PlayerButton>
        <PlayerGroup>
          <PlayerButton><PlayerGlyph d="M.5 3h2v10h-2zM9 3v10L3 8ZM15.500 3v10l-6-5Z" /></PlayerButton>
          <PlayerButton><PlayerGlyph d="M3 3h10v10H3z" /></PlayerButton>
          <PlayerButton><PlayerGlyph d="M13.500 3h2v10h-2zM7 3v10l6-5ZM.5 3v10l6-5Z" /></PlayerButton>
        </PlayerGroup>
        <PlayerGroup>
          <PlayerButton><PlayerGlyph w={18} stroke d="M1.500 5V2H5M11 2h3.500v3M14.500 11v3H11M5 14H1.500v-3" /></PlayerButton>
          <PlayerButton><PlayerGlyph w={18} stroke d="M2.500 1v14M8 1v14M13.500 1v14M.5 4h4M6 11h4M11.500 6.500h4" /></PlayerButton>
        </PlayerGroup>
        <PlayerGroup>
          <PlayerButton><svg width="16" height="16" viewBox="0 0 16 16"><path d="M1 2.500h14M1 7.500h14M1 12.500h8" stroke="#6e6e6e" strokeWidth="2" /><path d="m11 10 4 3-4 3Z" fill="#6e6e6e" /></svg></PlayerButton>
          <PlayerButton><svg width="16" height="16" viewBox="0 0 16 16" fill="none" stroke="#6e6e6e" strokeWidth="2"><path d="M2 7V3h9M14 9v4H5" /><path d="m10 0 4 3-4 3ZM6 10l-4 3 4 3Z" fill="#6e6e6e" stroke="none" /></svg></PlayerButton>
          <PlayerButton><svg width="16" height="16" viewBox="0 0 16 16" fill="none" stroke="#6e6e6e" strokeWidth="2"><path d="m1.500 14 10-10M2 3l3.500 3.500M9 9.500l3 3" /><path d="M9 1.500h5.500V7ZM14.500 9v5.500H9Z" fill="#6e6e6e" stroke="none" /></svg></PlayerButton>
        </PlayerGroup>
        <Volume>
          <svg width="114" height="31" viewBox="0 0 114 31">
            <defs><linearGradient id="vol" x1="0" x2="1"><stop offset="0" stopColor="#7fcf7f" /><stop offset=".8" stopColor="#1ccc18" /><stop offset=".95" stopColor="#19d010" /><stop offset="1" stopColor="#9ac800" /></linearGradient></defs>
            <path d="M1 19.500h2.500L7 17v11l-3.500-2.500H1Z" fill="#6e6e6e" />
            <path d="M8.500 19.500c1.200 1.500 1.200 4.500 0 6M10.500 18c2 2.500 2 6.500 0 9M12.300 17c2.400 3 2.400 8 0 11" fill="none" stroke="#f49b23" strokeWidth="1.200" />
            <path d="M23 26.500 81 10v16.500Z" fill="url(#vol)" />
            <path d="M23 26.800h70.500q1 0 1-1V7.500q0-1.500-1.500-1L23 25q-1 1.800 0 1.800Z" fill="none" stroke="#777" strokeWidth="1.500" />
            <path d="M109 21.500h2v2h-2zM106 24.500h2v2h-2zM109 24.500h2v2h-2zM103 26.500h2v2h-2zM106 26.500h2v2h-2zM109 26.500h2v2h-2z" fill="#bdbdbd" />
          </svg>
          <VolumeText>100%</VolumeText>
        </Volume>
      </Player>
      <BottomStrip>
        <Slice $w={1} $c="#000" /><Slice $w={1} $c="#fff" /><Slice $w={6} $c="#b5d0ec" /><Slice $w={487} $c="#000" /><Slice $w={5} $c="#b5d0ec" /><Slice $w={1} $c="#000" />
      </BottomStrip>
    </Screen>
  );
}
